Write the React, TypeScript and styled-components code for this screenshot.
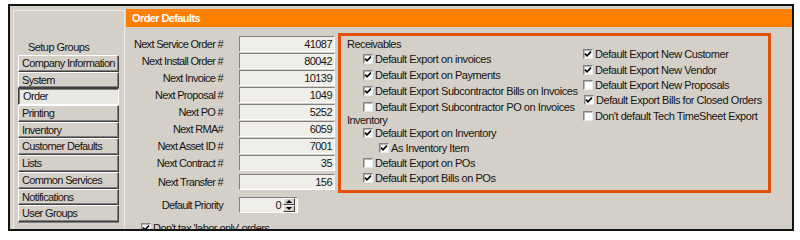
import React from 'react';
import styled, { createGlobalStyle } from 'styled-components';

const colors = {
  face: '#d4d0c8',
  field: '#efeee8',
  light: '#ffffff',
  shadow: '#808080',
  dark: '#404040',
  text: '#141414',
  header: '#ff8000',
  highlight: '#e2500a',
};

const groups = [
  'Company Information',
  'System',
  'Order',
  'Printing',
  'Inventory',
  'Customer Defaults',
  'Lists',
  'Common Services',
  'Notifications',
  'User Groups',
];

const counters = [
  { label: 'Next Service Order #', value: '41087' },
  { label: 'Next Install Order #', value: '80042' },
  { label: 'Next Invoice #', value: '10139' },
  { label: 'Next Proposal #', value: '1049' },
  { label: 'Next PO #', value: '5252' },
  { label: 'Next RMA#', value: '6059' },
  { label: 'Next Asset ID #', value: '7001' },
  { label: 'Next Contract #', value: '35' },
  { label: 'Next Transfer #', value: '156', gap: 2 },
];

const receivables = [
  { label: 'Default Export on invoices', checked: true },
  { label: 'Default Export on Payments', checked: true },
  { label: 'Default Export Subcontractor Bills on Invoices', checked: true },
  { label: 'Default Export Subcontractor PO on Invoices', checked: false },
];

const inventory = [
  { label: 'Default Export on Inventory', checked: true, indent: 0 },
  { label: 'As Inventory Item', checked: true, indent: 1 },
  { label: 'Default Export on POs', checked: false, indent: 0 },
  { label: 'Default Export Bills on POs', checked: true, indent: 0 },
];

const exportsRight = [
  { label: 'Default Export New Customer', checked: true },
  { label: 'Default Export New Vendor', checked: true },
  { label: 'Default Export New Proposals', checked: false },
  { label: 'Default Export Bills for Closed Orders', checked: true, nudge: 1 },
  { label: "Don't default Tech TimeSheet Export", checked: false },
];

const GlobalStyle = createGlobalStyle`
  html, body {
    margin: 0;
    padding: 0;
    background: #ffffff;
  }
  body {
    font-family: "Liberation Sans", Arial, sans-serif;
    font-size: 11px;
    letter-spacing: -0.55px;
    color: ${colors.text};
  }
  * {
    box-sizing: border-box;
  }
`;

const Frame = styled.div`
  margin: 4px 0 0 8px;
  width: 786px;
  height: 227px;
  border: 2px solid #141414;
  background: ${colors.face};
  display: flex;
  padding-top: 3px;
  overflow: hidden;
`;

const Sidebar = styled.div`
  width: 112px;
  flex: none;
  margin: 1px 1px 0 3px;
  border-top: 1px solid #ecebe6;
  border-left: 1px solid #ecebe6;
  border-right: 1px solid #ecebe6;
  padding-top: 29px;
  display: flex;
  flex-direction: column;
  align-items: flex-start;
`;

const SidebarTitle = styled.div`
  height: 15px;
  line-height: 15px;
  margin-left: 14px;
  text-align: left;
`;

const GroupList = styled.div`
  display: flex;
  flex-direction: column;
  margin-left: 4px;
  width: 101px;
  border-bottom: 1px solid ${colors.shadow};
`;

const GroupButton = styled.div<{ $active?: boolean }>`
  height: 16.7px;
  line-height: 15px;
  padding-left: ${(p) => (p.$active ? 4 : 3)}px;
  letter-spacing: -0.65px;
  white-space: nowrap;
  overflow: hidden;
  background: ${(p) => (p.$active ? '#e9e8e2' : colors.face)};
  border: 1px solid;
  border-color: ${(p) =>
    p.$active
      ? `${colors.dark} ${colors.light} ${colors.light} ${colors.dark}`
      : `${colors.light} ${colors.dark} ${colors.dark} ${colors.light}`};
  box-shadow: ${(p) =>
    p.$active ? `inset 1px 1px ${colors.shadow}` : `inset -1px -1px ${colors.shadow}`};
`;

const Main = styled.div`
  flex: 1;
  display: flex;
  flex-direction: column;
`;

const Header = styled.div`
  height: 18px;
  line-height: 18px;
  background: ${colors.header};
  color: #ffffff;
  font-weight: bold;
  padding-left: 6px;
  letter-spacing: -0.6px;
`;

const Body = styled.div`
  display: flex;
  align-items: flex-start;
  padding-top: 6px;
`;

const Form = styled.div`
  width: 212px;
  margin-top: 2px;
  display: flex;
  flex-direction: column;
`;

const FieldRow = styled.div<{ $gap?: number }>`
  display: grid;
  grid-template-columns: 97px 96px;
  column-gap: 16px;
  align-items: center;
  height: 17px;
  margin-top: ${(p) => p.$gap ?? 0}px;
`;

const FieldLabel = styled.div`
  text-align: right;
  white-space: nowrap;
  letter-spacing: -0.68px;
`;

const NumberField = styled.div<{ $width?: number }>`
  width: ${(p) => p.$width ?? 96}px;
  height: 16px;
  line-height: 14px;
  background: ${colors.field};
  border: 1px solid;
  border-color: ${colors.shadow} ${colors.light} ${colors.light} ${colors.shadow};
  padding-right: 2px;
  display: flex;
  justify-content: flex-end;
  align-items: stretch;
`;

const SpinValue = styled.span`
  padding-right: 1px;
`;

const SpinButtons = styled.div`
  width: 12px;
  display: flex;
  flex-direction: column;
  margin-left: 1px;
`;

const SpinHalf = styled.div`
  flex: 1;
  background: ${colors.face};
  border: 1px solid;
  border-color: ${colors.light} ${colors.dark} ${colors.dark} ${colors.light};
  display: flex;
  align-items: center;
  justify-content: center;
`;

const TaxRow = styled.div`
  display: flex;
  align-items: center;
  gap: 2px;
  margin: 9px 0 0 15px;
  white-space: nowrap;
  height: 12px;
`;

const ExportBox = styled.div`
  width: 433px;
  height: 160px;
  border: 3px solid ${colors.highlight};
  display: grid;
  grid-template-columns: 237px 1fr;
  padding-left: 5px;
`;

const Column = styled.div<{ $top?: number }>`
  display: flex;
  flex-direction: column;
  padding-top: ${(p) => p.$top ?? 0}px;
`;

const SectionTitle = styled.div<{ $height: number }>`
  height: ${(p) => p.$height}px;
  line-height: 12px;
  padding-left: 1px;
  display: flex;
  align-items: center;
`;

const CheckRow = styled.div<{ $indent?: number; $height?: number }>`
  display: flex;
  align-items: center;
  gap: 2px;
  height: ${(p) => p.$height ?? 16}px;
  padding-left: ${(p) => p.$indent ?? 0}px;
  letter-spacing: -0.45px;
  white-space: nowrap;
`;

const Box = styled.span<{ $nudge?: number }>`
  width: 10px;
  height: 10px;
  flex: none;
  margin-left: ${(p) => p.$nudge ?? 0}px;
  background: #ffffff;
  border: 1px solid;
  border-color: ${colors.shadow} #e8e8e8 #e8e8e8 ${colors.shadow};
  box-shadow: inset 1px 1px #b8b8b8;
  display: flex;
  align-items: center;
  justify-content: center;
`;

const Check = ({ checked, nudge }: { checked: boolean; nudge?: number }) => (
  <Box $nudge={nudge}>
    {checked && (
      <svg width="8" height="8" viewBox="0 0 8 8">
        <path d="M1 3.6 L3 5.8 L7 1.6" fill="none" stroke="#000" strokeWidth="1.6" />
      </svg>
    )}
  </Box>
);

const Arrow = ({ up }: { up?: boolean }) => (
  <svg width="6" height="3" viewBox="0 0 6 3">
    <path d={up ? 'M0 3 L3 0 L6 3 Z' : 'M0 0 L3 3 L6 0 Z'} fill="#000" />
  </svg>
);

const App: React.FC = () => {
  return (
    <>
      <GlobalStyle />
      <Frame>
        <Sidebar>
          <SidebarTitle>Setup Groups</SidebarTitle>
          <GroupList>
            {groups.map((name) => (
              <GroupButton key={name} $active={name === 'Order'}>
                {name}
              </GroupButton>
            ))}
          </GroupList>
        </Sidebar>
        <Main>
          <Header>Order Defaults</Header>
          <Body>
            <Form>
              {counters.map((item) => (
                <FieldRow key={item.label} $gap={item.gap}>
                  <FieldLabel>{item.label}</FieldLabel>
                  <NumberField>{item.value}</NumberField>
                </FieldRow>
              ))}
              <FieldRow $gap={6}>
                <FieldLabel>Default Priority</FieldLabel>
                <NumberField $width={59}>
                  <SpinValue>0</SpinValue>
                  <SpinButtons>
                    <SpinHalf>
                      <Arrow up />
                    </SpinHalf>
                    <SpinHalf>
                      <Arrow />
                    </SpinHalf>
                  </SpinButtons>
                </NumberField>
              </FieldRow>
              <TaxRow>
                <Check checked />
                Don't tax 'labor only' orders
              </TaxRow>
            </Form>
            <ExportBox>
              <Column $top={1}>
                <SectionTitle $height={14}>Receivables</SectionTitle>
                {receivables.map((item) => (
                  <CheckRow key={item.label} $indent={17}>
                    <Check checked={item.checked} />
                    {item.label}
                  </CheckRow>
                ))}
                <SectionTitle $height={10}>Inventory</SectionTitle>
                {inventory.map((item) => (
                  <CheckRow key={item.label} $indent={item.indent ? 33 : 17} $height={15}>
                    <Check checked={item.checked} />
                    {item.label}
                  </CheckRow>
                ))}
              </Column>
              <Column $top={10.6}>
                {exportsRight.map((item) => (
                  <CheckRow key={item.label} $height={15.4}>
                    <Check checked={item.checked} nudge={item.nudge} />
                    {item.label}
                  </CheckRow>
                ))}
              </Column>
            </ExportBox>
          </Body>
        </Main>
      </Frame>
    </>
  );
};

export default App;
